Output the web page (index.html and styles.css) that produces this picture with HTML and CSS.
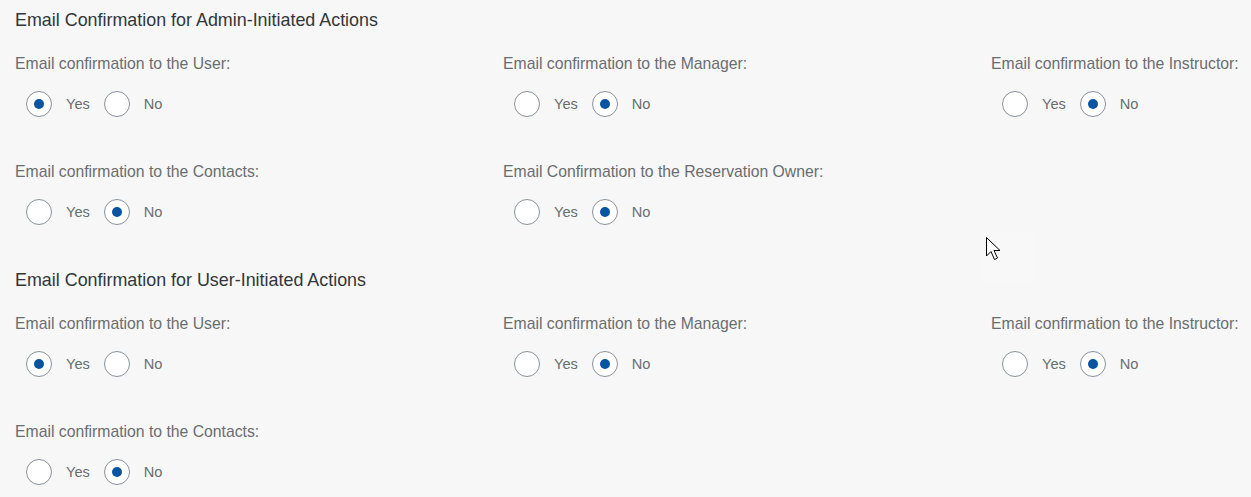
FILE: index.html
```html
<!DOCTYPE html>
<html>
<head>
<meta charset="utf-8">
<link rel="stylesheet" href="styles.css">
</head>
<body>
<div class="page">
  <section class="section">
    <h2 class="title">Email Confirmation for Admin-Initiated Actions</h2>
    <div class="grid">
      <div class="field">
        <div class="label">Email confirmation to the User:</div>
        <div class="group"><span class="opt"><span class="radio on"></span>Yes</span><span class="opt"><span class="radio"></span>No</span></div>
      </div>
      <div class="field">
        <div class="label">Email confirmation to the Manager:</div>
        <div class="group"><span class="opt"><span class="radio"></span>Yes</span><span class="opt"><span class="radio on"></span>No</span></div>
      </div>
      <div class="field">
        <div class="label">Email confirmation to the Instructor:</div>
        <div class="group"><span class="opt"><span class="radio"></span>Yes</span><span class="opt"><span class="radio on"></span>No</span></div>
      </div>
      <div class="field">
        <div class="label">Email confirmation to the Contacts:</div>
        <div class="group"><span class="opt"><span class="radio"></span>Yes</span><span class="opt"><span class="radio on"></span>No</span></div>
      </div>
      <div class="field">
        <div class="label">Email Confirmation to the Reservation Owner:</div>
        <div class="group"><span class="opt"><span class="radio"></span>Yes</span><span class="opt"><span class="radio on"></span>No</span></div>
      </div>
    </div>
  </section>
  <section class="section second">
    <h2 class="title">Email Confirmation for User-Initiated Actions</h2>
    <div class="grid">
      <div class="field">
        <div class="label">Email confirmation to the User:</div>
        <div class="group"><span class="opt"><span class="radio on"></span>Yes</span><span class="opt"><span class="radio"></span>No</span></div>
      </div>
      <div class="field">
        <div class="label">Email confirmation to the Manager:</div>
        <div class="group"><span class="opt"><span class="radio"></span>Yes</span><span class="opt"><span class="radio on"></span>No</span></div>
      </div>
      <div class="field">
        <div class="label">Email confirmation to the Instructor:</div>
        <div class="group"><span class="opt"><span class="radio"></span>Yes</span><span class="opt"><span class="radio on"></span>No</span></div>
      </div>
      <div class="field">
        <div class="label">Email confirmation to the Contacts:</div>
        <div class="group"><span class="opt"><span class="radio"></span>Yes</span><span class="opt"><span class="radio on"></span>No</span></div>
      </div>
    </div>
  </section>
  <div class="cursor-area">
    <svg class="cursor" width="20" height="28" viewBox="0 0 20 28"><path d="M1.5 1.5 L1.5 20 L6 15.5 L9.5 23.5 L12.5 22 L9 14.5 L15 14.5 Z" fill="#fff" stroke="#000" stroke-width="1" stroke-linejoin="miter"/></svg>
  </div>
</div>
</body>
</html>
```
FILE: styles.css
```css
html, body {
  margin: 0;
  padding: 0;
  background: #f7f7f7;
}
body {
  font-family: "Liberation Sans", Arial, sans-serif;
  overflow: hidden;
}
.page {
  position: relative;
  padding-left: 15px;
  width: 1236px;
  height: 497px;
}
.section.second {
  margin-top: 4px;
}
.title {
  margin: 0;
  height: 40px;
  line-height: 40px;
  font-size: 17.9px;
  font-weight: normal;
  color: #32363a;
  white-space: nowrap;
}
.grid {
  display: grid;
  grid-template-columns: 488px 488px 260px;
  grid-auto-rows: 108px;
}
.field {
  display: flex;
  flex-direction: column;
}
.label {
  margin-top: 14px;
  height: 20px;
  line-height: 20px;
  font-size: 15.75px;
  color: #6a6d70;
  white-space: nowrap;
}
.group {
  margin-top: 8px;
  height: 44px;
  display: flex;
  align-items: center;
  padding-left: 11px;
}
.opt {
  display: flex;
  align-items: center;
  gap: 14px;
  padding-right: 14px;
  font-size: 14.6px;
  color: #6a6d70;
}
.radio {
  box-sizing: border-box;
  width: 26px;
  height: 26px;
  border: 1px solid #89919a;
  border-radius: 50%;
  background: #fff;
  display: flex;
  align-items: center;
  justify-content: center;
}
.radio.on::after {
  content: "";
  width: 10px;
  height: 10px;
  border-radius: 50%;
  background: #0854a0;
}
.cursor-area {
  position: absolute;
  left: 981px;
  top: 233px;
  width: 54px;
  height: 50px;
  background: #f8f8f8;
}
.cursor {
  position: absolute;
  left: 4px;
  top: 3px;
}
```
